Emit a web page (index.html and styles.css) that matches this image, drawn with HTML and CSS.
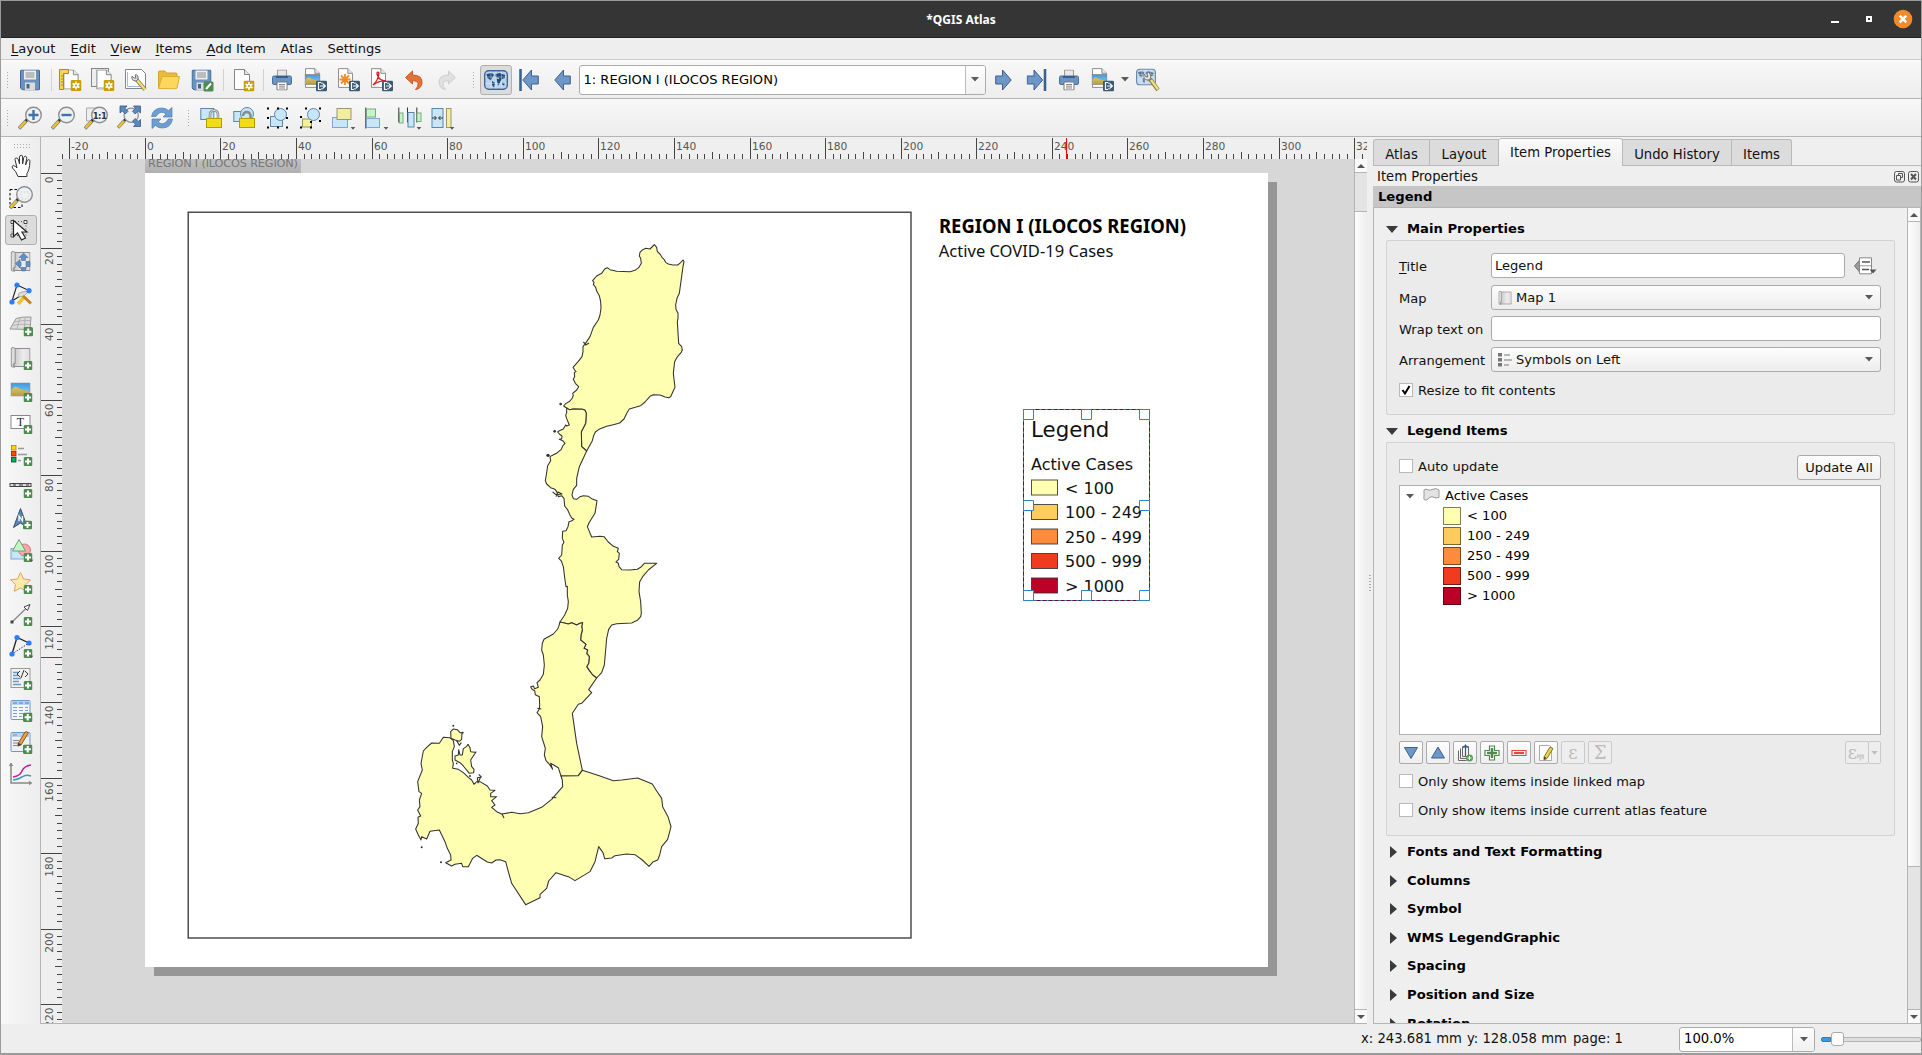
FILE: index.html
```html
<!DOCTYPE html>
<html lang="en">
<head>
<meta charset="utf-8">
<title>*QGIS Atlas</title>
<link rel="stylesheet" href="styles.css">
</head>
<body>
<svg class="defs" width="0" height="0">
  <defs>
    <linearGradient id="gray" x1="0" x2="1"><stop offset="0" stop-color="#c9c9c9"/><stop offset=".6" stop-color="#ececec"/><stop offset="1" stop-color="#dcdcdc"/></linearGradient>
    <linearGradient id="sky" x1="0" x2="0" y1="0" y2="1"><stop offset="0" stop-color="#3b9ae0"/><stop offset="1" stop-color="#8fd0f5"/></linearGradient>
    <linearGradient id="sand" x1="0" x2="0" y1="0" y2="1"><stop offset="0" stop-color="#e2c65c"/><stop offset="1" stop-color="#b09c4a"/></linearGradient>
    <linearGradient id="pagetab" x1="0" x2="0" y1="0" y2="1"><stop offset="0" stop-color="#c0c0c0"/><stop offset="1" stop-color="#b0b0b0"/></linearGradient>
    <symbol id="plus" viewBox="0 0 9 9"><rect width="9" height="9" rx="1.5" fill="#4f8a50"/><path d="M4.5 1.5v6M1.500 4.500h6" stroke="#fff" stroke-width="2"/></symbol>
    <symbol id="gear" viewBox="0 0 11 11"><rect width="11" height="11" rx="1.500" fill="#c4a000"/><path d="M5.500 1.500v8M2 3.500l7 4M2 7.500l7-4" stroke="#fff" stroke-width="1.500"/><circle cx="5.500" cy="5.500" r="2.500" fill="#fff"/><circle cx="5.500" cy="5.500" r="1.100" fill="#c4a000"/></symbol>
    <symbol id="export" viewBox="0 0 11 11"><rect width="11" height="11" rx="1.500" fill="#3a5a78"/><path d="M5 2H2.500v7H5M6 3.500V2M6 9V7.500M4 5.500h5M7 3.300l2.300 2.200L7 7.700" stroke="#fff" stroke-width="1.200" fill="none"/></symbol>
    <symbol id="sheet" viewBox="0 0 16 21"><path d="M.5.5h10l5 5v15H.5z" fill="#fff" stroke="#858585"/><path d="M10.500.5v5h5" fill="#e8e8e8" stroke="#858585"/></symbol>
    <symbol id="floppy" viewBox="0 0 20 21"><path d="M1.500.5h17q1 0 1 1v18q0 1-1 1h-16l-2-2v-17q0-1 1-1z" fill="#6b93bd" stroke="#3f6896"/><rect x="4" y="1" width="12" height="9" fill="#efefef"/><path d="M5.500 3.500h9M5.500 5.500h9M5.500 7.500h9" stroke="#8a8a8a"/><rect x="5" y="13" width="10" height="7.500" fill="#dcdcdc"/><rect x="6.500" y="14.500" width="3" height="4.500" fill="#3f6896"/></symbol>
    <symbol id="printer" viewBox="0 0 20 21"><path d="M5.500 8V.5h9V8" fill="#e8e8e8" stroke="#999"/><rect x=".5" y="6.500" width="19" height="8.500" rx="1.500" fill="#6b93c4" stroke="#4a6f9c"/><path d="M4 6.500h12v2H4z" fill="#3c5f8a"/><path d="M5 12.500h10v8H5z" fill="#fff" stroke="#777"/><path d="M7 15h6M7 16.700h6M7 18.500h6" stroke="#666" stroke-width=".8"/></symbol>
    <symbol id="pict" viewBox="0 0 20 14"><rect x=".5" y=".5" width="19" height="13" fill="url(#sky)" stroke="#8c8c8c"/><path d="M1 7l4-3 6 3 8 2v4.500H1z" fill="url(#sand)"/></symbol>
    <symbol id="arrow" viewBox="0 0 17 22"><path d="M.8 11L9.500 1v6h6.800v8H9.500v6z" fill="#6c97c7" stroke="#3c618f"/></symbol>
    <symbol id="lens" viewBox="0 0 24 24"><path d="M1 22.500l7-7.500" stroke="#777" stroke-width="3.600"/><path d="M1.500 22l6-6.500" stroke="#f2c427" stroke-width="2.400"/><path d="M8 15l2-2.500" stroke="#222" stroke-width="3"/><circle cx="15.500" cy="9" r="7.800" fill="#eef0f1" stroke="#8d8f91" stroke-width="1.400"/></symbol>
    <symbol id="down" viewBox="0 0 8 5"><path d="M0 0h8L4 4.600z" fill="#5a5a5a"/></symbol>
    <symbol id="globe" viewBox="0 0 24 20"><rect x=".7" y=".7" width="22.600" height="18.600" rx="4" fill="#b9d2ee" stroke="#3c6695" stroke-width="1.400"/><path d="M2.500 4l5.500-1 2 2-2 3-1 2.500-3.500-2.500zM8 11l3 2-1 4.500-2-2.500zM11.500 4l4-1 5.500 2v3l-3 1-2 3-1-4-3.500-1zM12.500 8.500l3.500 1v3.500l-2 2.500zM18 12.500l3 1-1 2-2-1z" fill="#244b76"/><path d="M1 7h22M1 13.500h22M7 1v18M12 1v18M17.500 1v18" stroke="#e8f2fc" stroke-width=".4"/></symbol>
    <symbol id="roll" viewBox="0 0 20 21"><path d="M3.500 1.500h16v18h-16z" fill="url(#gray)" stroke="#8d8d8d"/><path d="M.7 2q0-1.500 2-1.500t2 2v14q-2-1-2 1.500 0 2 1.500 2H2Q.7 20 .7 18z" fill="#dedede" stroke="#8d8d8d"/></symbol>
  </defs>
</svg>

<div class="window">
  <header class="titlebar">
    <span class="window-title">*QGIS Atlas</span>
    <svg class="window-buttons" width="90" height="36" viewBox="0 0 90 36"><path d="M11 21h8" stroke="#fff" stroke-width="2"/><rect x="47" y="16" width="4" height="4" fill="none" stroke="#fff" stroke-width="2"/><circle cx="83" cy="18" r="9.300" fill="#f28a2a"/><path d="M79.700 14.700l6.600 6.600M86.300 14.700l-6.600 6.600" stroke="#fff" stroke-width="2.400"/></svg>
  </header>
  <nav class="menubar">
    <span class="m-layout"><u>L</u>ayout</span><span class="m-edit"><u>E</u>dit</span><span class="m-view"><u>V</u>iew</span><span class="m-items"><u>I</u>tems</span><span class="m-add"><u>A</u>dd Item</span><span class="m-atlas">Atlas</span><span>Settings</span>
  </nav>

  <div class="toolbar top">
    <i class="grip"></i>
    <span class="tool"><svg viewBox="0 0 24 24"><use href="#floppy" x="2" y="1.500" width="20" height="21"/></svg></span>
    <i class="sep"></i>
    <span class="tool"><svg viewBox="0 0 24 24"><use href="#sheet" x="4" y="1.500" width="18" height="20"/><path d="M1.500 1.500h9v4h-5v16h-4z" fill="#f6d65a" stroke="#b58900"/><path d="M3 8h2M3 11h2M3 14h2M3 17h2" stroke="#b58900"/><use href="#gear" x="12.500" y="12" width="11" height="11"/></svg></span>
    <span class="tool"><svg viewBox="0 0 24 24"><path d="M.5 18V.5h17" fill="#ddd" stroke="#858585"/><rect x=".5" y=".5" width="17" height="18" fill="#eee" stroke="#858585"/><use href="#sheet" x="4" y="1.500" width="18" height="20"/><path d="M6.500 5v14.500h9" fill="none" stroke="#bcd3f5"/><use href="#gear" x="12.500" y="12" width="11" height="11"/></svg></span>
    <span class="tool"><svg viewBox="0 0 24 24"><path d="M1.500 1.500h16l4 4v15h-20z" fill="#fff" stroke="#858585"/><path d="M3.500 4v14.500h15" fill="none" stroke="#9db9f0"/><path d="M12 11l9 10.500" stroke="#8a7a3a" stroke-width="4"/><path d="M13 12l8 9.500" stroke="#f0dc82" stroke-width="2.400"/><path d="M8 8q-1 5 4 5 3-1 2-5-2-2-3-1l1 3-2 0z" fill="#ddd" stroke="#777"/></svg></span>
    <span class="tool"><svg viewBox="0 0 24 24"><path d="M1.500 20V4q0-1 1-1h5.500l1.500 2H19q1 0 1 1v3" fill="#e9bd3c" stroke="#d3a52a"/><path d="M1.500 20.500L5 8.500h17.500L20 20q0 .7-1 .7z" fill="#fbd75b" stroke="#dcae32"/></svg></span>
    <span class="tool"><svg viewBox="0 0 24 24"><use href="#floppy" x="1.500" y="1.500" width="20" height="21"/><rect x="13.500" y="13.500" width="10" height="10" rx="1.500" fill="#4f8a50"/><path d="M16 21l5-5.500" stroke="#fff" stroke-width="2"/></svg></span>
    <i class="sep wide"></i>
    <span class="tool"><svg viewBox="0 0 24 24"><use href="#sheet" x="2" y="1" width="16" height="21"/><use href="#gear" x="11.500" y="12.500" width="11" height="11"/></svg></span>
    <i class="sep slim"></i>
    <span class="tool"><svg viewBox="0 0 24 24"><use href="#printer" x="2" y="1.500" width="20" height="21"/></svg></span>
    <span class="tool"><svg viewBox="0 0 24 24"><use href="#sheet" x="2" y="0" width="15" height="20"/><use href="#pict" x="1.500" y="6" width="16" height="11"/><use href="#export" x="13" y="12.500" width="11" height="11"/></svg></span>
    <span class="tool"><svg viewBox="0 0 24 24"><use href="#sheet" x="2" y="0" width="15" height="20"/><path d="M9 6v11M3.500 11.500h11M5 7.500l8 8M13 7.500l-8 8" stroke="#f58a1f" stroke-width="1.800"/><use href="#export" x="13" y="12.500" width="11" height="11"/></svg></span>
    <span class="tool"><svg viewBox="0 0 24 24"><use href="#sheet" x="2" y="0" width="15" height="20"/><path d="M4 17q5-4 6-12-2-2-2 1 2 7 9 7-6-1-13 4z" fill="none" stroke="#e02020" stroke-width="1.400"/><use href="#export" x="13" y="12.500" width="11" height="11"/></svg></span>
    <span class="tool"><svg viewBox="0 0 24 24"><path d="M3.500 9.500l7-6.500v4q10 0 9.500 8-1 6-6.500 6.500 3-3 2.500-6-1-3-5.500-3V16z" fill="#e0743a" stroke="#cf5a20"/></svg></span>
    <span class="tool"><svg viewBox="0 0 24 24"><path d="M20.500 9.500l-7-6.500v4q-10 0-9.500 8 1 6 6.500 6.500-3-3-2.500-6 1-3 5.500-3V16z" fill="#dfe0df" stroke="#cfcfcf"/></svg></span>
    <i class="grip second"></i>
    <span class="tool pressed"><svg viewBox="0 0 24 24"><use href="#globe" x="0" y="2" width="24" height="20"/></svg></span>
    <span class="tool nav-first"><svg viewBox="0 0 24 24"><path d="M3.500 1v22" stroke="#3c618f" stroke-width="2.600"/><use href="#arrow" x="5" y="1" width="17" height="22"/></svg></span>
    <span class="tool"><svg viewBox="0 0 24 24"><use href="#arrow" x="4" y="1" width="17" height="22"/></svg></span>
    <div class="combo atlas-combo"><span>1: REGION I (ILOCOS REGION)</span><b><svg width="8" height="5"><use href="#down" width="8" height="5"/></svg></b></div>
    <span class="tool"><svg viewBox="0 0 24 24"><use href="#arrow" transform="translate(21 1) scale(-1 1)" width="17" height="22"/></svg></span>
    <span class="tool"><svg viewBox="0 0 24 24"><path d="M21 1v22" stroke="#3c618f" stroke-width="2.600"/><use href="#arrow" transform="translate(19.500 1) scale(-1 1)" width="17" height="22"/></svg></span>
    <span class="tool"><svg viewBox="0 0 24 24"><use href="#printer" x="2" y="1.500" width="20" height="21"/></svg></span>
    <span class="tool"><svg viewBox="0 0 24 24"><use href="#sheet" x="2" y="0" width="15" height="20"/><use href="#pict" x="1.500" y="6" width="16" height="11"/><use href="#export" x="13" y="12.500" width="11" height="11"/></svg></span>
    <svg class="mini" width="8" height="5"><use href="#down" width="8" height="5"/></svg>
    <span class="tool"><svg viewBox="0 0 24 24"><g opacity=".75"><use href="#globe" x="0" y="0" width="20" height="18"/></g><path d="M14 11l8 11" stroke="#8a7a3a" stroke-width="4"/><path d="M15 12l7 9.500" stroke="#f0dc82" stroke-width="2.400"/><path d="M8 6q-1 6 4 6 4-1 2-6-2-3-3-1l1 4-2 0z" fill="#eee" stroke="#777"/></svg></span>
  </div>

  <div class="toolbar lower">
    <i class="grip"></i>
    <span class="tool"><svg viewBox="0 0 24 24"><use href="#lens" width="24" height="24"/><path d="M15.500 4v10M10.500 9h10" stroke="#3f73ae" stroke-width="2.400"/></svg></span>
    <span class="tool"><svg viewBox="0 0 24 24"><use href="#lens" width="24" height="24"/><path d="M10.500 9h10" stroke="#3f73ae" stroke-width="2.400"/></svg></span>
    <span class="tool"><svg viewBox="0 0 24 24"><path d="M2.500 2h9v13h-9z" fill="#eee" stroke="#aaa"/><use href="#lens" width="24" height="24"/><text x="15.500" y="12.500" class="one-one">1:1</text></svg></span>
    <span class="tool"><svg viewBox="0 0 24 24"><use href="#lens" x="0" y="1" width="22" height="22"/><path d="M3 0h7L8 2.300l3 3L8.300 8l-3-3L3 7zM23.500 0h-7l2 2.300-3 3L18.200 8l3-3 2.300 2zM23.500 20.500h-7l2-2.300-3-3 2.700-2.700 3 3 2.300-2z" fill="#5b88bd" stroke="#345a88" stroke-width=".8"/></svg></span>
    <span class="tool"><svg viewBox="0 0 24 24"><path d="M1.500 10.500Q3 2 12 2q4 0 6.500 2.500L22 1.500V11h-9l3-3q-5-4-9 1-1 2-1.500 1.500zM22.500 13Q21 22 12 22q-4 0-6.500-2.500L2 22.500V13h9l-3 3q5 4 9-1 1-2 1.500-2z" fill="#6f9dd2" stroke="#4f7fb8" stroke-width=".7"/></svg></span>
    <i class="grip third"></i>
    <span class="tool"><svg viewBox="0 0 24 24"><rect x=".8" y="2.500" width="13" height="11" fill="#c7e6fa" stroke="#5d86a8"/><path d="M10 13V9q0-4.500 4-4.500T18 9v4" fill="none" stroke="#8a8a8a" stroke-width="2.600"/><path d="M10 13V9q0-4.500 4-4.500T18 9v4" fill="none" stroke="#d8d8d8" stroke-width="1"/><rect x="6.500" y="12.500" width="15" height="9" fill="#f1dc18" stroke="#b59a00"/></svg></span>
    <span class="tool"><svg viewBox="0 0 24 24"><rect x=".8" y="5.500" width="12" height="10" fill="#c7e6fa" stroke="#5d86a8"/><circle cx="14" cy="8" r="6.500" fill="#c7e6fa" stroke="#5d86a8"/><path d="M17.500 13V9q-1-3.500-4.500-3-3 1-3 4" fill="none" stroke="#8a8a8a" stroke-width="2.400"/><rect x="6.500" y="12.500" width="15" height="9" fill="#f1dc18" stroke="#b59a00"/></svg></span>
    <span class="tool"><svg viewBox="0 0 24 24"><rect x="4.500" y="10.500" width="12" height="10" fill="#c7e6fa" stroke="#5d86a8"/><circle cx="14.500" cy="8.500" r="6" fill="#c7e6fa" stroke="#5d86a8"/><path d="M1 2.500h2M11 2.500h2M20 2.500h2M1 12h2M20 12h2M1 21.500h2M11 21.500h2M20 21.500h2" stroke="#000" stroke-width="2"/></svg></span>
    <span class="tool"><svg viewBox="0 0 24 24"><rect x="3.500" y="13" width="9" height="8" fill="#f5efa0" stroke="#9a9450"/><circle cx="14.500" cy="8.500" r="6" fill="#c7e6fa" stroke="#5d86a8"/><path d="M6 2.500h2M20 2.500h2M1 11h2M11 16h2M20 15h2M1 21.500h2M11 21.500h2" stroke="#000" stroke-width="2"/></svg></span>
    <span class="tool"><svg viewBox="0 0 24 24"><rect x=".5" y="11.500" width="15" height="10" fill="#c7e6fa" stroke="#7fa8c8"/><rect x="5" y="2.500" width="14" height="11" fill="#f3eda0" stroke="#9a9670"/><use href="#down" x="18.500" y="21" width="5" height="3"/></svg></span>
    <span class="tool"><svg viewBox="0 0 24 24"><path d="M.8 1.500v21" stroke="#333"/><rect x="1.500" y="3" width="9" height="8" fill="#c4f5c8" stroke="#78ac7c"/><rect x="1.500" y="12.500" width="13" height="9" fill="#c7e6fa" stroke="#7fa8c8"/><use href="#down" x="18.500" y="21" width="5" height="3"/></svg></span>
    <span class="tool"><svg viewBox="0 0 24 24"><path d="M.8 1.500v15M9.500 1.500v15M18.800 1.500v15" stroke="#333"/><rect x="1.500" y="7" width="3.500" height="10" fill="#c4f5c8" stroke="#78ac7c"/><rect x="10" y="6.500" width="6" height="14.500" fill="#c7e6fa" stroke="#5d86a8"/><rect x="19" y="7" width="4" height="8.500" fill="#c4f5c8" stroke="#78ac7c"/><use href="#down" x="18.500" y="21" width="5" height="3"/></svg></span>
    <span class="tool"><svg viewBox="0 0 24 24"><rect x="1" y="2.500" width="11" height="19" fill="#c7e6fa" stroke="#5d86a8"/><path d="M1 12h4M3.500 10l2 2-2 2M12 12H8M9.500 10l-2 2 2 2" stroke="#333" fill="none"/><rect x="15.500" y="2.500" width="4.500" height="19" fill="#f3eda0" stroke="#9a9670"/><use href="#down" x="18.500" y="21" width="5" height="3"/></svg></span>
  </div>

  <main class="workspace">
    <aside class="toolbox">
      <i class="grip-h"></i>
      <span class="tool"><svg viewBox="0 0 24 24"><path d="M9 22.500Q7 17 3.500 14q-1-2 .8-2.500Q6.500 12 8 14L6 5.500Q6 3.700 7.500 4 9 4 9.500 6L10.500 10V3q.3-1.800 1.700-1.700 1.400 0 1.400 1.700V10l1.200-6.500q.6-1.500 1.900-1.200 1.300.5 1 2L16.500 11l1.800-4.500q.8-1.200 2-.7 1 .7.600 2.200-.4 8-3 11.500v3z" fill="#fff" stroke="#333"/></svg></span>
      <span class="tool"><svg viewBox="0 0 24 24"><rect x="1" y="3.500" width="12" height="18" fill="none" stroke="#000" stroke-dasharray="2.500 2"/><use href="#lens" transform="translate(0 -.5)" width="24" height="24"/><path d="M12 6h8v7h-8z" fill="none" stroke="#ccc" stroke-dasharray="1 2"/></svg></span>
      <span class="tool pressed"><svg viewBox="0 0 24 24"><rect x="3" y="3.500" width="14" height="14" fill="none" stroke="#555" stroke-dasharray="1 2"/><path d="M2 2.500h3v3H2zM15 2.500h3v3h-3zM2 16h3v3H2z" fill="#fff" stroke="#444"/><path d="M4.500 2.500v16l4-3.500 4 7 4-2-3.500-6h5z" fill="#fff" stroke="#222" stroke-width="1.200"/></svg></span>
      <span class="tool"><svg viewBox="0 0 24 24"><use href="#roll" x="1.500" y="1" width="20" height="21"/><path d="M14.500 3l4.500 4.500h-2.500v3h-4v-3H10zM6.500 13.500l4.500-4v2.500h1v4h-1V18zM17 11.500h4v5h-4zM11.500 17.500h6l-1.500 3.500h-3z" fill="#5f8fc5" stroke="#3c618f" stroke-width=".5"/></svg></span>
      <span class="tool"><svg viewBox="0 0 24 24"><path d="M3 19L8 3l12 5.500L3 19" fill="none" stroke="#222" stroke-width="1.100"/><path d="M10 15q-2-4 3-5l7-1-5 5z" fill="#ddd" stroke="#aaa"/><path d="M9 22l7-8" stroke="#efc52c" stroke-width="3.500"/><path d="M14 14l8 7.500" stroke="#c8821a" stroke-width="3"/><circle cx="8" cy="3" r="2.600" fill="#2a7fff"/><circle cx="20" cy="8.700" r="2.600" fill="#2a7fff"/><circle cx="3" cy="20" r="2.600" fill="#2a7fff"/></svg></span>
      <span class="tool"><svg viewBox="0 0 24 24"><path d="M7 4.500q6-2 15-1.500l-1 13q-8-1-20-1z" fill="#dcdcdc" stroke="#999"/><path d="M5 8q8-2 16-1.500M3 11.500q8-2 18-1M11 4q-2 6-3 11M16 3q0 7-1 13" fill="none" stroke="#aaa" stroke-width=".8"/><use href="#plus" x="14.500" y="13" width="9.500" height="9.500"/></svg></span>
      <span class="tool"><svg viewBox="0 0 24 24"><use href="#roll" x="1.500" y="1" width="20" height="21"/><use href="#plus" x="14.500" y="15" width="9" height="9"/></svg></span>
      <span class="tool"><svg viewBox="0 0 24 24"><use href="#pict" x="1.500" y="4.500" width="20" height="14"/><use href="#plus" x="14.500" y="15" width="9" height="9"/></svg></span>
      <span class="tool"><svg viewBox="0 0 24 24"><rect x="2" y="5.500" width="19" height="13" fill="#fff" stroke="#888"/><text x="11.500" y="16" class="tee">T</text><use href="#plus" x="14.500" y="15" width="9" height="9"/></svg></span>
      <span class="tool"><svg viewBox="0 0 24 24"><g stroke-width=".8"><rect x="2.500" y="3.500" width="4.500" height="4.500" fill="#ffd400" stroke="#c87800"/><rect x="2.500" y="9.500" width="4.500" height="4.500" fill="#ff4a00" stroke="#a01400"/><rect x="2.500" y="15.500" width="4.500" height="4.500" fill="#00b060" stroke="#004a20"/></g><path d="M9 6.500h6M9 12.500h9M9 18.500h3" stroke="#999" stroke-width="1.600"/><use href="#plus" x="14.500" y="15" width="9" height="9"/></svg></span>
      <span class="tool"><svg viewBox="0 0 24 24"><rect x="1" y="9.500" width="21" height="3" fill="#ddd" stroke="#444"/><path d="M4 11h3M10 11h4M17 11h3" stroke="#888" stroke-width="2"/><use href="#plus" x="14.500" y="15" width="9" height="9"/></svg></span>
      <span class="tool"><svg viewBox="0 0 24 24"><path d="M11.500 2.500l7 19-7-4.500-7 4.500z" fill="#5f86b5" stroke="#2f5078"/><path d="M10 15v-5l3.500 5v-5" stroke="#fff" fill="none" stroke-width="1.300"/><use href="#plus" x="14" y="14.500" width="9" height="9"/></svg></span>
      <span class="tool"><svg viewBox="0 0 24 24"><rect x="2" y="10.500" width="14" height="10.500" fill="#c7e6fa" stroke="#7fa8c8"/><circle cx="15.500" cy="12" r="6" fill="#f7a8a8" stroke="#d07a7a"/><path d="M10 1.500L16.500 13H3.500z" fill="#c4f5c8" stroke="#6aa070"/><use href="#plus" x="14.500" y="15" width="9" height="9"/><use href="#down" x="20" y="21.500" width="5" height="2.500"/></svg></span>
      <span class="tool"><svg viewBox="0 0 24 24"><path d="M11.500 2.500l3 6.500 7 .8-5 5 1 6.500-6-3.300-6.200 3.300 1.200-6.800-5-4.700 7-.8z" fill="#fde9a9" stroke="#e0a558"/><use href="#plus" x="14.500" y="15" width="9" height="9"/></svg></span>
      <span class="tool"><svg viewBox="0 0 24 24"><path d="M3 20L17 6.500" stroke="#888" stroke-width="1.300"/><path d="M1.500 18.500h3v3h-3z" fill="#444"/><path d="M21 2.500l-6 2.500 3.500 3.500z" fill="#fff" stroke="#444"/><use href="#plus" x="14.500" y="15" width="9" height="9"/></svg></span>
      <span class="tool"><svg viewBox="0 0 24 24"><path d="M3 20L8 3.500l12 5.500" fill="none" stroke="#222" stroke-width="1.300"/><path d="M3 20L20 9" stroke="#222" stroke-dasharray="1.300 1.500"/><circle cx="8" cy="3.500" r="2.600" fill="#2a7fff"/><circle cx="20" cy="9" r="2.600" fill="#2a7fff"/><circle cx="3" cy="20" r="2.600" fill="#2a7fff"/><use href="#plus" x="14.500" y="15" width="9" height="9"/><use href="#down" x="20" y="21.500" width="5" height="2.500"/></svg></span>
      <span class="tool"><svg viewBox="0 0 24 24"><rect x="2" y="2.500" width="19" height="19" fill="#f2f2f2" stroke="#999"/><path d="M4 6.500h6M4 9.500h5M4 12.500h8M4 15.500h6M4 18.500h8" stroke="#6c97c7" stroke-width="1.600"/><path d="M11 5L8 8l3 3M16 5l3 3-3 3M15 4l-3 8" fill="none" stroke="#333"/><use href="#plus" x="14.500" y="15" width="9" height="9"/></svg></span>
      <span class="tool"><svg viewBox="0 0 24 24"><rect x="2" y="2.500" width="19" height="19" rx="1" fill="#f6f6f6" stroke="#6c97c7"/><path d="M2.500 3h18v4h-18z" fill="#b7d3ee"/><path d="M4 5h4M10 5h4M16 5h4" stroke="#4a7db5"/><path d="M4 9.500h4M10 9.500h4M16 9.500h3M4 12.500h4M10 12.500h4M16 12.500h3M4 15.500h4M10 15.500h4M4 18.500h4M10 18.500h3" stroke="#7aa2cc"/><use href="#plus" x="14" y="14.500" width="9.500" height="9.500"/></svg></span>
      <span class="tool"><svg viewBox="0 0 24 24"><rect x="2" y="2.500" width="19" height="19" rx="1" fill="#f0f0f0" stroke="#6c97c7"/><path d="M2.500 3h18v4h-18z" fill="#b7d3ee"/><path d="M4 5h4M4 10.500h6M4 13h5M4 15.500h4" stroke="#888"/><path d="M9.500 13L16 2q3-1 3 1.500L12 15l-3 1z" fill="#e9a04a" stroke="#8a5a20"/><path d="M8.500 16.500l.5-4 3.500 2z" fill="#444"/><use href="#plus" x="14" y="14.500" width="9.500" height="9.500"/></svg></span>
      <span class="tool"><svg viewBox="0 0 24 24"><path d="M2 1v20h20" fill="none" stroke="#888" stroke-width="1.500"/><path d="M0 4l2-3 2 3M20 19l3 2-3 2" fill="#888" stroke="#888" stroke-width=".5"/><path d="M4 15q7-1 9-6 2-5 9-6" fill="none" stroke="#c020a0" stroke-width="1.500"/><path d="M4 18q5-.5 9-3 4-3 9-1" fill="none" stroke="#3a9ab8" stroke-width="1.500"/></svg></span>
    </aside>

    <section class="view">
      <svg id="hruler" class="hruler" width="1326" height="21"></svg>
      <div class="view-row">
        <svg id="vruler" class="vruler" width="21" height="864"></svg>
        <svg class="canvas" width="1292" height="864" viewBox="62 159 1292 864">
          <rect x="154" y="182" width="1123" height="794" fill="#969696"/>
          <rect x="145" y="159" width="156" height="14" fill="url(#pagetab)"/>
          <text x="148" y="167" class="page-tab" textLength="150">REGION I (ILOCOS REGION)</text>
          <rect x="145" y="173" width="1123" height="794" fill="#fff"/>
          <rect x="188.200" y="212.200" width="722.800" height="725.800" fill="none" stroke="#333" stroke-width="1.300"/>
          <g class="regions" transform="translate(400 230) scale(.33333)">
            <path d="M763 44L770 52 772 65 780 72 786 82 792 88 797 97 805 102 818 105 833 105 842 98 849 90 852 94 849 110 838 190 831 205 827 225 828 238 834 250 834 265 832 275 836 340 845 350 847 360 843 368 831 382 824 395 820 430 825 472 818 487 812 500 806 503 795 501 780 495 760 494 750 499 735 516 722 527 706 532 688 537 681 548 672 567 659 579 640 584 620 589 597 598 586 606 581 617 577 632 560 663 545 650 544 605 551 592 557 580 559 550 555 541 548 538 520 537 508 539 500 534 491 528 497 521 510 513 517 504 520 496 518 490 530 480 536 470 526 460 520 448 524 440 523 428 528 425 524 420 519 412 535 394 546 380 549 365 549 350 560 335 570 320 580 292 595 270 600 255 603 235 602 215 598 197 590 183 587 172 580 163 582 157 578 152 590 138 605 130 614 117 622 113 630 119 650 124 690 125 705 121 716 113 724 100 722 85 718 78 720 67 728 59 738 55 750 57 756 51Z"/>
            <path d="M500 534L500 548 497 556 500 566 508 585 500 588 497 585 490 597 478 602 473 606 478 612 486 618 485 626 478 628 488 632 495 640 488 648 484 658 472 668 455 677 450 680 452 692 443 707 439 735 436 752 440 762 452 773 465 778 470 785 475 800 485 797 492 805 494 828 502 838 510 855 516 865 522 868 514 873 507 875 504 890 498 902 488 904 487 925 492 937 487 945 485 975 476 985 484 993 490 1010 495 1050 498 1070 502 1069 502 1095 505 1115 503 1135 494 1155 480 1176 490 1178 505 1182 515 1178 530 1185 540 1180 548 1178 545 1190 547 1200 543 1215 542 1230 558 1243 552 1255 563 1260 560 1270 568 1280 566 1300 560 1310 568 1322 578 1335 590 1344 605 1328 613 1305 617 1260 620 1225 626 1198 635 1185 650 1181 695 1179 712 1171 722 1160 724 1150 722 1115 717 1085 719 1055 728 1040 745 1020 770 1000 733 1000 722 1012 712 1018 690 1020 665 1019 657 1010 655 1000 648 996 656 988 658 970 652 965 655 955 640 949 625 936 612 920 600 919 575 921 562 890 568 877 585 850 591 812 575 806 565 799 550 797 540 800 530 808 520 806 516 795 520 778 530 766 530 745 538 710 560 663 545 650 544 605 551 592 557 580 559 550 555 541 548 538 520 537 508 539Z"/>
            <path d="M480 1176L476 1190 473 1197 460 1212 432 1228 427 1240 425 1260 430 1275 433 1305 430 1333 420 1350 411 1358 415 1372 404 1376 400 1368 392 1370 396 1378 404 1382 406 1394 418 1400 419 1425 418 1437 411 1448 422 1460 428 1490 425 1520 433 1545 436 1555 433 1575 438 1592 449 1604 458 1618 452 1600 475 1613 483 1638 535 1637 547 1621 530 1540 517 1450 535 1423 545 1420 575 1388 566 1379 590 1344 578 1335 568 1322 560 1310 566 1300 568 1280 560 1270 563 1260 552 1255 558 1243 542 1230 543 1215 547 1200 545 1190 548 1178 540 1180 530 1185 515 1178 505 1182 490 1178Z"/>
            <path d="M547 1621L600 1638 640 1652 665 1650 713 1644 757 1662 768 1680 785 1705 788 1730 804 1760 813 1790 803 1828 785 1850 779 1875 773 1890 760 1895 747 1909 727 1890 705 1874 680 1872 645 1877 635 1884 614 1886 609 1868 596 1850 585 1895 570 1925 525 1952 505 1940 468 1928 446 1953 440 1975 420 1993 420 2003 377 2024 335 1960 325 1925 317 1895 300 1889 288 1890 275 1899 262 1896 230 1876 218 1885 205 1910 188 1910 185 1900 165 1903 155 1908 137 1898 153 1890 152 1875 142 1855 135 1835 118 1800 90 1804 80 1827 65 1820 63 1830 55 1815 47 1797 55 1780 54 1762 62 1758 53 1740 60 1730 58 1710 65 1690 57 1685 53 1655 67 1620 63 1600 70 1563 80 1552 95 1539 118 1540 130 1522 150 1523 160 1532 163 1550 157 1565 157 1590 160 1600 158 1615 175 1618 190 1628 205 1642 215 1650 222 1663 230 1655 240 1655 262 1668 270 1680 285 1681 272 1690 272 1700 290 1700 275 1712 285 1725 275 1732 290 1745 305 1752 335 1747 360 1751 385 1748 425 1732 455 1708 488 1670 487 1650 483 1638 535 1637Z"/>
            <path d="M152 1505L160 1497 172 1499 180 1508 186 1508 185 1528 178 1534 165 1530 153 1525ZM176 1559L180 1575 187 1575 190 1556 200 1549 204 1543 210 1553 212 1565 225 1567 228 1566 212 1590 215 1610 222 1618 221 1628 208 1630 190 1608 180 1598 165 1590 165 1578 175 1575ZM170 1532l8 14 6-8M236 1633l8 8-12 2 2 16 8-18M458 786l10 8 18-2-12-6-6 14M550 336l8 8 8-4-10 6M306 1752l6 12M455 1702l14 1M412 1435l12 2"/>
            <g fill="#333" stroke="none"><circle cx="482" cy="522" r="4"/><circle cx="464" cy="604" r="4"/><circle cx="444" cy="676" r="5"/><circle cx="160" cy="1487" r="3"/><circle cx="65" cy="1852" r="3"/><circle cx="123" cy="1897" r="3"/><circle cx="170" cy="1600" r="2.500"/><circle cx="210" cy="1638" r="3"/><circle cx="188" cy="1508" r="3"/></g>
          </g>
          <text x="939" y="232.500" class="map-title" textLength="247" lengthAdjust="spacingAndGlyphs">REGION I (ILOCOS REGION)</text>
          <text x="938.800" y="256.800" class="map-sub" textLength="174.500" lengthAdjust="spacingAndGlyphs">Active COVID-19 Cases</text>
          <g class="legend">
            <text x="1031" y="437" class="legend-title">Legend</text>
            <text x="1031" y="470">Active Cases</text>
            <g stroke="#333" stroke-opacity=".85">
              <rect x="1031.500" y="480" width="26" height="15" fill="#ffffb2"/>
              <rect x="1031.500" y="504.500" width="26" height="15" fill="#fecc5c"/>
              <rect x="1031.500" y="529" width="26" height="15" fill="#fd8d3c"/>
              <rect x="1031.500" y="553.500" width="26" height="15" fill="#f03b20"/>
              <rect x="1031.500" y="578" width="26" height="15" fill="#bd0026"/>
            </g>
            <text x="1065" y="494">&lt; 100</text><text x="1065" y="518">100 - 249</text><text x="1065" y="543">250 - 499</text><text x="1065" y="567">500 - 999</text><text x="1065" y="592">&gt; 1000</text>
          </g>
          <rect x="1023.500" y="409.500" width="126" height="191" fill="none" stroke="#3c8fc8"/>
          <rect x="1023.500" y="409.500" width="126" height="191" fill="none" stroke="#6a0a3c" stroke-dasharray="4 2"/>
          <g fill="#fff" stroke="#2b86c4"><path d="M1023.500 409.500h10v10h-10zM1081.500 409.500h10v10h-10zM1139.500 409.500h10v10h-10zM1023.500 500.500h10v10h-10zM1139.500 500.500h10v10h-10zM1023.500 590.500h10v10h-10zM1081.500 590.500h10v10h-10zM1139.500 590.500h10v10h-10z"/></g>
        </svg>
        <div class="scrollbar canvas-scroll"><b class="up"></b><i class="groove"></i><i class="thumb"></i><b class="dn"></b></div>
      </div>
    </section>

    <i class="splitter"></i>

    <section class="dock">
      <div class="tabs"><span class="t1">Atlas</span><span class="t2">Layout</span><span class="t3 active">Item Properties</span><span class="t4">Undo History</span><span class="t5">Items</span></div>
      <div class="dock-title"><span>Item Properties</span>
        <svg width="26" height="12" viewBox="0 0 26 12"><g fill="none" stroke="#555"><rect x=".5" y=".5" width="10" height="10.500" rx="2"/><path d="M4.500 4.500v-2h4v4h-2M2.500 4.500h4v4.500h-4z"/><rect x="14.500" y=".5" width="10" height="10.500" rx="2"/><path d="M17 3l5 5.500M22 3l-5 5.500" stroke-width="2"/></g></svg>
      </div>
      <h1 class="item-heading">Legend</h1>
      <div class="panel">
        <div class="panel-body">
          <h2 class="open">Main Properties</h2>
          <div class="group main-group">
            <div class="field"><label><u>T</u>itle</label><div class="input">Legend</div>
              <svg class="override" width="24" height="18" viewBox="0 0 24 18"><path d="M6 2.500v13L.5 9z" fill="#9a9a9a" stroke="#777"/><path d="M5.500.8h12v16h-12z" fill="#fff" stroke="#888"/><path d="M8 5h8M8 12.500h7" stroke="#555" stroke-width="1.600"/><path d="M6 8.800h11" stroke="#999"/><path d="M15.500 12.500h7l-3.500 4z" fill="#555"/></svg></div>
            <div class="field"><label>Map</label><div class="select"><svg width="14" height="14" viewBox="0 0 20 21"><use href="#roll" width="20" height="21"/></svg><span>Map 1</span><svg class="caret" width="8" height="5"><use href="#down" width="8" height="5"/></svg></div></div>
            <div class="field"><label>Wrap text on</label><div class="input"></div></div>
            <div class="field"><label>Arrangement</label><div class="select"><svg width="14" height="14" viewBox="0 0 14 14"><path d="M0 0h4v3.500H0zM0 5h4v3.500H0zM0 10h4v3.500H0zM6 1.500h6v1H6zM6 6.500h8v1H6zM6 11.500h5v1H6z" fill="#777"/></svg><span>Symbols on Left</span><svg class="caret" width="8" height="5"><use href="#down" width="8" height="5"/></svg></div></div>
            <div class="check resize"><svg width="14" height="14"><rect x=".5" y=".5" width="13" height="13" fill="#fff" stroke="#b9b9b9"/><path d="M3.500 7l2.500 3.500L10.500 3" fill="none" stroke="#000" stroke-width="2"/></svg>Resize to fit contents</div>
          </div>
          <h2 class="open second">Legend Items</h2>
          <div class="group items-group">
            <div class="update-row"><div class="check"><i class="box"></i>Auto update</div><span class="push">Update All</span></div>
            <div class="tree">
              <div class="node"><svg class="twist" width="8" height="5"><use href="#down" width="8" height="5"/></svg><svg width="17" height="13" viewBox="0 0 17 13"><path d="M1 2Q2 .5 4 1.500 7 3 9 1.500 13-.5 16 2v7.500q-3 1-6-.5-2-1-4 1-2 2.500-4.500 2Q.5 11 1 8z" fill="#e3e3e3" stroke="#9a9a9a"/></svg><span>Active Cases</span></div>
              <div class="leaf"><i class="c1"></i>&lt; 100</div>
              <div class="leaf"><i class="c2"></i>100 - 249</div>
              <div class="leaf"><i class="c3"></i>250 - 499</div>
              <div class="leaf"><i class="c4"></i>500 - 999</div>
              <div class="leaf"><i class="c5"></i>&gt; 1000</div>
            </div>
            <div class="tree-buttons">
              <span><svg viewBox="0 0 18 18"><path d="M2.500 3.500h13L9 14.500z" fill="#6c97c7" stroke="#3c618f"/></svg></span>
              <span><svg viewBox="0 0 18 18"><path d="M2.500 14h13L9 3z" fill="#6c97c7" stroke="#3c618f"/></svg></span>
              <span><svg viewBox="0 0 18 18"><path d="M2.500 6.500v10h8M4.500 4.500v10h8M6.500 2.500h6v10h-6z" fill="none" stroke="#666"/><path d="M9.500 12V2M7.500 4l2-3 2 3" fill="none" stroke="#2f5d90" stroke-width="1.200"/><circle cx="13.500" cy="14" r="3.500" fill="#5c9a5e"/><path d="M13.500 12v4M11.500 14h4" stroke="#fff"/></svg></span>
              <span><svg viewBox="0 0 18 18"><path d="M6.500 2h5v4.500H16v5h-4.500V16h-5v-4.500H2v-5h4.500z" fill="#fff" stroke="#4f8a50" stroke-width="1.200"/><path d="M9 4v10M4 9h10" stroke="#4f8a50" stroke-width="2.400"/></svg></span>
              <span><svg viewBox="0 0 18 18"><path d="M2 6.500h14v5H2z" fill="#fff" stroke="#e84545" stroke-width="1.200"/><path d="M4 9h10" stroke="#e84545" stroke-width="2.200"/></svg></span>
              <span><svg viewBox="0 0 18 18"><path d="M2.500 1.500h10l2 2v13h-12z" fill="#fff" stroke="#aaa"/><path d="M7 13L13 3l3 1.500-6 10-3 1.500z" fill="#ecd24a" stroke="#8a7620"/><path d="M7 15.500l.3-3 2.200 1.500z" fill="#333"/></svg></span>
              <span class="off">ε</span>
              <span class="off">Σ</span>
              <span class="off eps">ε<svg viewBox="0 0 8 8"><path d="M0 1h8v5H6V3H5v5H3V3H2v2H0z" fill="#ccc"/></svg></span><span class="off drop"><svg class="drop-mark" width="7" height="4" viewBox="0 0 8 5"><path d="M0 0h8L4 4.600z" fill="#bdbdbd"/></svg></span>
            </div>
            <div class="check linked"><i class="box"></i>Only show items inside linked map</div>
            <div class="check"><i class="box"></i>Only show items inside current atlas feature</div>
          </div>
          <div class="closed-list"><h2>Fonts and Text Formatting</h2><h2>Columns</h2><h2>Symbol</h2><h2>WMS LegendGraphic</h2><h2>Spacing</h2><h2>Position and Size</h2><h2>Rotation</h2></div>
        </div>
        <div class="scrollbar panel-scroll"><b class="up"></b><i class="thumb"></i><i class="groove"></i><b class="dn"></b></div>
      </div>
    </section>
  </main>

  <footer class="statusbar">
    <span class="pos-x">x: 243.681 mm</span><span class="pos-y">y: 128.058 mm</span><span class="pos-p">page: 1</span>
    <div class="combo zoom-combo"><span>100.0%</span><b><svg width="8" height="5"><use href="#down" width="8" height="5"/></svg></b></div>
    <div class="slider"><i class="fill"></i><i class="knob"></i><i class="rest"></i></div>
  </footer>
</div>
<script src="script.js"></script>
</body>
</html>
```
FILE: styles.css
```css
* { box-sizing: border-box; }
html, body { margin: 0; height: 100%; overflow: hidden; }
body { font: 13.05px/16px "DejaVu Sans", sans-serif; color: #111; background: #efefef; }
svg { display: block; flex: none; overflow: visible; }
.defs { position: absolute; }
u { text-underline-offset: 2px; text-decoration-thickness: 1px; }

.window { width: 1922px; height: 1055px; display: flex; flex-direction: column; border: 1px solid #9b9b9b; border-bottom-width: 2px; overflow: hidden; }
.titlebar { flex: none; height: 37px; display: flex; align-items: center; background: #353535; border-bottom: 1px solid #222; color: #fff; padding-left: 101px; }
.window-title { flex: 1; text-align: center; font: bold 12px "Noto Sans", sans-serif; }
.window-buttons { margin-right: 11px; }

.menubar { flex: none; height: 22px; display: flex; align-items: center; padding: 1px 0 0 10px; border-bottom: 1px solid #cdcdcd; background: #eee; }
.m-layout { width: 59.5px; }
.m-edit { width: 40px; }
.m-view { width: 45px; }
.m-items { width: 51px; }
.m-add { width: 74px; }
.m-atlas { width: 47px; }

.toolbar { flex: none; display: flex; align-items: center; background: linear-gradient(#f8f8f8, #ededed); border-bottom: 1px solid #b5b5b5; }
.toolbar.top { height: 39px; padding-top: 1px; }
.toolbar.lower { height: 38px; }
.tool { flex: none; width: 33px; height: 30px; display: flex; align-items: center; justify-content: center; }
.tool svg { width: 24px; height: 24px; }
.pressed { width: 32px; border: 1px solid #b0b0b0; border-radius: 3px; background: #dcdcdc; }
.grip { flex: none; width: 4px; height: 18px; margin: 0 3.500px 0 5px; background: radial-gradient(circle, #aaa 0.8px, transparent 1px) 0 0 / 3px 3px; }
.grip.second { margin: 0 4px 0 8px; }
.grip.third { margin: 0 5px 0 8px; }
.sep { flex: none; width: 1px; height: 22px; margin: 0 2px 0 4px; background: #d2d2d2; }
.sep.wide { margin: 0 4px; }
.sep.slim { margin: 0 2px; }
.nav-first { margin-left: 1px; }
.mini { margin: 0 3px 0 2px; }
.one-one { font: bold 8.500px "DejaVu Sans", sans-serif; text-anchor: middle; fill: #333; letter-spacing: -.5px; }
.tee { font: 12px "Liberation Serif", serif; text-anchor: middle; fill: #222; }

.combo { flex: none; display: flex; align-items: stretch; background: #fff; border: 1px solid #ababab; border-radius: 3px; overflow: hidden; color: #000; }
.combo span { flex: 1; align-self: center; padding-left: 4px; }
.combo b { flex: none; width: 20px; display: flex; align-items: center; justify-content: center; border-left: 1px solid #bbb; background: linear-gradient(#fdfdfd, #f1f1f1); }
.zoom-combo b { width: 22px; }
.atlas-combo { width: 407px; height: 30px; margin: 0 1px 0 0; }

.workspace { flex: 1; min-height: 0; display: flex; background: #efefef; }
.toolbox { flex: none; width: 40px; padding-top: 1px; display: flex; flex-direction: column; background: linear-gradient(90deg, #f8f8f8, #ededed); border-right: 1px solid #b5b5b5; }
.grip-h { flex: none; width: 18px; height: 5px; margin: 5px 0 2px 12px; background: radial-gradient(circle, #aaa 0.8px, transparent 1px) 0 0 / 3px 3px; }
.toolbox .tool { margin: 1px 0 1px 4px; width: 32px; }

.view { flex: none; width: 1326px; display: flex; flex-direction: column; padding-top: 1px; border-bottom: 1px solid #b5b5b5; }
.hruler, .vruler { background: #efefef; overflow: hidden; }
.tick { stroke: #444; stroke-width: 1; shape-rendering: crispEdges; }
.cursor { stroke: #f00; stroke-width: 1; shape-rendering: crispEdges; }
.ruler-label { font: 10.67px "DejaVu Sans", sans-serif; fill: #555; }
.view-row { flex: 1; display: flex; }
.canvas { background: #d7d7d7; overflow: hidden; }
.regions { fill: #ffffb2; stroke: #333; stroke-width: 3.200; stroke-linejoin: round; }
.page-tab { font: 11.300px "DejaVu Sans", sans-serif; fill: #777; }
.map-title { font: bold 19.500px "Noto Sans", sans-serif; fill: #000; }
.map-sub { font: 16.400px "Noto Sans", sans-serif; fill: #111; }
.legend { font-size: 16px; fill: #111; }
.legend-title { font-size: 21.330px; }

.scrollbar { flex: none; width: 13px; display: flex; flex-direction: column; background: #fafafa; border-left: 1px solid #b5b5b5; }
.scrollbar b { height: 14px; display: flex; justify-content: center; align-items: center; }
.scrollbar b::before { content: ""; border: 4px solid transparent; }
.scrollbar .up { border-bottom: 1px solid #b5b5b5; }
.scrollbar .up::before { border-top: 0; border-bottom-color: #555; }
.scrollbar .dn { border-top: 1px solid #b5b5b5; }
.scrollbar .dn::before { border-bottom: 0; border-top-color: #555; }
.groove { background: #e4e4e4; }
.thumb { background: linear-gradient(90deg, #fdfdfd, #eee); }
.canvas-scroll .groove { height: 39px; border-bottom: 1px solid #b5b5b5; }
.canvas-scroll .thumb { flex: 1; }
.panel-scroll { width: 14px; border-right: 1px solid #b5b5b5; }
.panel-scroll .thumb { flex: 1; }
.panel-scroll .groove { height: 143px; border-top: 1px solid #b5b5b5; }

.splitter { flex: none; align-self: center; width: 2px; height: 17px; margin: 3px 2px 0 2px; background: radial-gradient(circle, #aaa 0.8px, transparent 1px) 0 0 / 2px 3px; }
.dock { flex: 1; min-width: 0; display: flex; flex-direction: column; }
.tabs { flex: none; height: 29px; display: flex; align-items: flex-end; border-bottom: 1px solid #b9b9b9; font-size: 13.2px; }
.tabs span { height: 26px; padding-top: 7px; text-align: center; background: #dcdcdc; border: 1px solid #b9b9b9; border-left-width: 0; border-bottom: 0; }
.tabs .t1 { width: 57px; border-left-width: 1px; border-radius: 3px 0 0 0; }
.tabs .t2 { width: 69px; }
.tabs .t3 { width: 124px; }
.tabs .t4 { width: 109px; }
.tabs .t5 { width: 60px; border-radius: 0 3px 0 0; }
.tabs .active { height: 28px; margin-bottom: -1px; padding-top: 6px; background: linear-gradient(#fafafa, #efefef); border-radius: 3px 3px 0 0; }
.dock-title { flex: none; height: 20px; display: flex; align-items: center; justify-content: space-between; padding: 2px 1px 0 4px; font-size: 13.2px; }
.item-heading { flex: none; height: 22px; margin: 0; padding: 3px 5px; font: bold 13.15px/16px "DejaVu Sans", sans-serif; background: #c6c6c6; border-bottom: 1px solid #b5b5b5; color: #000; }
.panel { flex: 1; min-height: 0; display: flex; border: 1px solid #b5b5b5; border-top: 0; border-right: 0; }
.panel-body { flex: 1; overflow: hidden; padding: 13px 12px 0 12px; }
.panel h2 { height: 16px; margin: 0; padding-left: 21px; font: bold 13.15px/16px "DejaVu Sans", sans-serif; color: #000; display: flex; align-items: center; }
.panel h2::before { content: ""; margin: 0 10px 0 -17px; border: solid transparent; border-width: 6px 0 6px 7px; border-left-color: #3a3a3a; }
.panel h2.open::before { margin: 1px 9px 0 -21px; border-width: 7px 6px 0 6px; border-top-color: #3a3a3a; border-left-color: transparent; }
.group { border: 1px solid #d2d2d2; border-radius: 2px; background: #ebebeb; padding: 0 13px 0 12px; }
.main-group { height: 175px; margin-top: 3px; padding-top: 12px; display: flex; flex-direction: column; gap: 6px; }
.field { height: 25px; display: flex; align-items: center; }
.field label { width: 92px; white-space: nowrap; padding-top: 2px; }
.input { flex: 1; height: 25px; padding: 4px 3px; background: #fff; border: 1px solid #ababab; border-radius: 3px; }
.override { margin: 0 3px 0 9px; }
.select { flex: 1; height: 25px; display: flex; align-items: center; gap: 4px; padding: 0 7px 0 6px; background: linear-gradient(#fdfdfd, #ededed); border: 1px solid #ababab; border-radius: 3px; }
.select .caret { margin-left: auto; }
.field:first-child { margin-bottom: 1px; }
.check { height: 14px; display: flex; align-items: flex-start; gap: 5px; white-space: nowrap; }
.resize { margin-top: 5px; }
.box { flex: none; width: 14px; height: 14px; background: #fff; border: 1px solid #b9b9b9; }
.panel h2.second { margin-top: 8px; }
.items-group { height: 394px; margin-top: 3px; padding-top: 12px; }
.update-row { display: flex; justify-content: space-between; align-items: flex-start; }
.update-row .check { margin-top: 4px; }
.push { width: 84px; height: 25px; padding-top: 4px; text-align: center; border: 1px solid #ababab; border-radius: 3px; background: linear-gradient(#fdfdfd, #efefef); }
.tree { height: 250px; margin-top: 5px; background: #fff; border: 1px solid #b0b0b0; color: #000; }
.node { height: 20px; display: flex; align-items: center; padding-left: 6px; }
.node svg + svg { margin: -3px 5px 0 9px; }
.leaf { height: 20px; display: flex; align-items: center; gap: 6px; padding-left: 43px; }
.leaf i { width: 18px; height: 18px; border: 1px solid rgba(0, 0, 0, .5); }
.c1 { background: #ffffb2; }
.c2 { background: #fecc5c; }
.c3 { background: #fd8d3c; }
.c4 { background: #f03b20; }
.c5 { background: #bd0026; }
.tree-buttons { display: flex; gap: 3px; margin-top: 6px; height: 23px; }
.tree-buttons span { width: 24px; height: 23px; display: flex; align-items: center; justify-content: center; border: 1px solid #ababab; border-radius: 2px; background: linear-gradient(#fdfdfd, #efefef); }
.tree-buttons svg { width: 18px; height: 18px; }
.tree-buttons .off { border-color: #cacaca; background: #eee; color: #c0b8c0; font: 18px "DejaVu Serif", serif; }
.tree-buttons .eps { margin-left: auto; padding-right: 2px; }
.tree-buttons .eps svg { width: 7px; height: 8px; margin-top: 8px; }
.tree-buttons .drop { width: 13px; margin-left: -4px; }
.tree-buttons .drop-mark { width: 7px; height: 4px; }
.linked { margin: 10px 0 15px; }
.closed-list { display: flex; flex-direction: column; gap: 12.600px; margin-top: 8px; }

.statusbar { flex: none; height: 29px; display: flex; align-items: center; padding: 1px 0 0 1360px; white-space: nowrap; background: #eee; font-size: 13.2px; }
.pos-x { width: 106px; }
.pos-y { width: 106px; }
.pos-p { width: 106px; }
.zoom-combo { width: 136px; height: 25px; }
.slider { display: flex; align-items: center; width: 100px; margin-left: 6px; }
.slider i { display: block; height: 5px; }
.slider .fill { width: 10px; background: #3a9ade; border: 1px solid #2b7fbd; border-radius: 2px 0 0 2px; }
.slider .knob { width: 13px; height: 14px; border: 1px solid #aaa; border-radius: 3px; background: #fbfbfb; }
.slider .rest { flex: 1; background: #ddd; border: 1px solid #b5b5b5; border-left: 0; border-radius: 0 2px 2px 0; }
```
FILE: script.js
```js
// Draws the millimetre rulers along the top and left edges of the layout view.
const NS = 'http://www.w3.org/2000/svg';
const PX_PER_MM = 3.7795;

function add(parent, name, attrs, text) {
  const el = document.createElementNS(NS, name);
  for (const key in attrs) el.setAttribute(key, attrs[key]);
  if (text !== undefined) el.textContent = text;
  parent.appendChild(el);
}

function tickLength(mm) {
  if (mm % 20 === 0) return 21;
  return mm % 10 === 0 ? 7 : 5;
}

const h = document.getElementById('hruler');
for (let mm = -22; mm <= 322; mm += 2) {
  const x = Math.floor(104.3 + mm * PX_PER_MM) + 0.5;
  add(h, 'line', { x1: x, x2: x, y1: 21 - tickLength(mm), y2: 21, class: 'tick' });
  if (mm % 20 === 0) add(h, 'text', { x: x + 1.5, y: 12, class: 'ruler-label' }, mm);
}
add(h, 'line', { x1: 1025.5, x2: 1025.5, y1: 0, y2: 21, class: 'cursor' });

const v = document.getElementById('vruler');
for (let mm = -2; mm <= 224; mm += 2) {
  const y = Math.floor(14.3 + mm * PX_PER_MM) + 0.5;
  add(v, 'line', { x1: 21 - tickLength(mm), x2: 21, y1: y, y2: y, class: 'tick' });
  if (mm % 20 === 0) {
    add(v, 'text', { transform: `translate(12.3 ${y + 3}) rotate(-90)`, 'text-anchor': 'end', class: 'ruler-label' }, mm);
  }
}
add(v, 'line', { x1: 0, x2: 21, y1: 498.5, y2: 498.5, class: 'cursor' });
```
